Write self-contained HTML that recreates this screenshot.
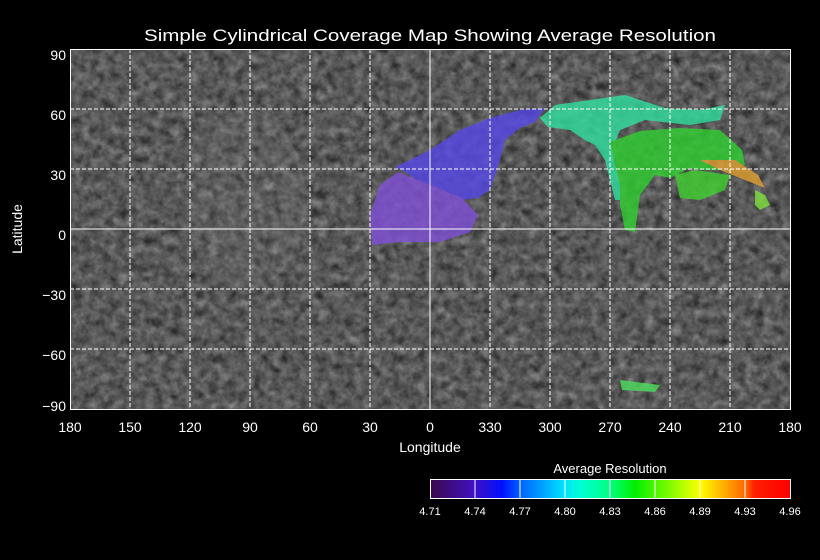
<!DOCTYPE html>
<html><head><meta charset="utf-8"><style>
html,body{margin:0;padding:0;background:#000;width:820px;height:560px;overflow:hidden}
svg{display:block}
text{font-family:"Liberation Sans",sans-serif;fill:#fff}
</style></head><body>
<svg width="820" height="560" viewBox="0 0 820 560" xmlns="http://www.w3.org/2000/svg">
<defs>
<filter id="tex" x="0" y="0" width="100%" height="100%" color-interpolation-filters="sRGB">
<feTurbulence type="fractalNoise" baseFrequency="0.11" numOctaves="3" seed="4" result="n"/>
<feColorMatrix type="matrix" values="0.33 0.33 0.33 0 0  0.33 0.33 0.33 0 0  0.33 0.33 0.33 0 0  0 0 0 0 1" in="n" result="g"/>
<feComponentTransfer in="g"><feFuncR type="linear" slope="0.7" intercept="0.0"/><feFuncG type="linear" slope="0.7" intercept="0.0"/><feFuncB type="linear" slope="0.7" intercept="0.0"/></feComponentTransfer>
</filter>
<linearGradient id="cb" x1="430" x2="790" y1="0" y2="0" gradientUnits="userSpaceOnUse">
<stop offset="0" stop-color="#3a0a4a"/><stop offset="0.12" stop-color="#4010c0"/><stop offset="0.2" stop-color="#0010ff"/><stop offset="0.25" stop-color="#0060ff"/><stop offset="0.37" stop-color="#00e0ff"/><stop offset="0.42" stop-color="#00ffd0"/><stop offset="0.5" stop-color="#00ff80"/><stop offset="0.57" stop-color="#00ee00"/><stop offset="0.7" stop-color="#b0ff00"/><stop offset="0.75" stop-color="#ffff00"/><stop offset="0.88" stop-color="#ff6000"/><stop offset="0.9" stop-color="#ff2000"/><stop offset="1" stop-color="#ff0000"/>
</linearGradient>
</defs>
<text x="430" y="41" font-size="17" text-anchor="middle" textLength="572" lengthAdjust="spacingAndGlyphs">Simple Cylindrical Coverage Map Showing Average Resolution</text>
<rect x="70" y="49" width="720" height="360" fill="#555"/>
<rect x="70" y="49" width="720" height="360" filter="url(#tex)"/>
<ellipse cx="245" cy="200" rx="60" ry="90" fill="#888" opacity="0.15"/>
<g opacity="0.8">
<polygon fill="#5548e8" points="545,108 535,122 520,128 505,140 500,160 490,190 478,198 462,200 440,195 420,182 405,172 395,167 410,160 430,150 460,130 490,118 520,110"/>
<polygon fill="#8050d8" points="372,245 370,215 380,185 398,172 430,185 462,198 478,215 470,232 440,242 400,242"/>
<polygon fill="#30e0a0" points="540,118 555,105 590,100 625,95 640,100 665,108 700,110 725,105 720,120 690,125 645,120 620,130 612,150 620,175 625,200 615,200 605,160 595,145 585,140 570,130 548,127"/>
<polygon fill="#30d030" points="610,142 640,131 680,128 720,130 742,150 745,165 720,170 700,170 690,168 670,178 655,175 640,195 635,232 625,230 620,205 620,185 615,165"/>
<polygon fill="#40d030" points="675,175 695,170 730,175 725,190 700,200 680,198"/>
<polygon fill="#e0a030" points="700,160 735,160 758,175 765,188 750,182 720,170"/>
<polygon fill="#80e040" points="755,190 765,195 770,205 760,210 755,205"/>
<polygon fill="#50e060" points="620,380 660,385 655,392 622,390"/>
</g>
<g stroke="#fff" stroke-width="1" stroke-dasharray="4,2" fill="none">
<path d="M130 49V409M190 49V409M250 49V409M310 49V409M370 49V409M490 49V409M550 49V409M610 49V409M670 49V409M730 49V409"/>
<path d="M70 109H790M70 169H790M70 289H790M70 349H790"/>
</g>
<path d="M430 49V409M70 229H790" stroke="#fff" stroke-width="1"/>
<rect x="70.5" y="49.5" width="720" height="360" fill="none" stroke="#fff"/>
<g font-size="14" text-anchor="end">
<text x="66" y="60">90</text><text x="66" y="120">60</text><text x="66" y="180">30</text><text x="66" y="240">0</text><text x="66" y="300">−30</text><text x="66" y="360">−60</text><text x="66" y="411">−90</text>
</g>
<g font-size="14" text-anchor="middle">
<text x="70" y="432">180</text><text x="130" y="432">150</text><text x="190" y="432">120</text><text x="250" y="432">90</text><text x="310" y="432">60</text><text x="370" y="432">30</text><text x="430" y="432">0</text><text x="490" y="432">330</text><text x="550" y="432">300</text><text x="610" y="432">270</text><text x="670" y="432">240</text><text x="730" y="432">210</text><text x="790" y="432">180</text>
<text x="430" y="452">Longitude</text>
<text x="610" y="473" font-size="13">Average Resolution</text>
</g>
<text transform="translate(22,229) rotate(-90)" font-size="14" text-anchor="middle">Latitude</text>
<rect x="430" y="479" width="360" height="20" fill="url(#cb)"/>
<g stroke="#fff" stroke-width="1"><path d="M475 479V499M520 479V499M565 479V499M610 479V499M655 479V499M700 479V499M745 479V499"/></g>
<rect x="430.5" y="479.5" width="360" height="19" fill="none" stroke="#fff"/>
<g font-size="11" text-anchor="middle">
<text x="430" y="515">4.71</text><text x="475" y="515">4.74</text><text x="520" y="515">4.77</text><text x="565" y="515">4.80</text><text x="610" y="515">4.83</text><text x="655" y="515">4.86</text><text x="700" y="515">4.89</text><text x="745" y="515">4.93</text><text x="790" y="515">4.96</text>
</g>
</svg>
</body></html>
